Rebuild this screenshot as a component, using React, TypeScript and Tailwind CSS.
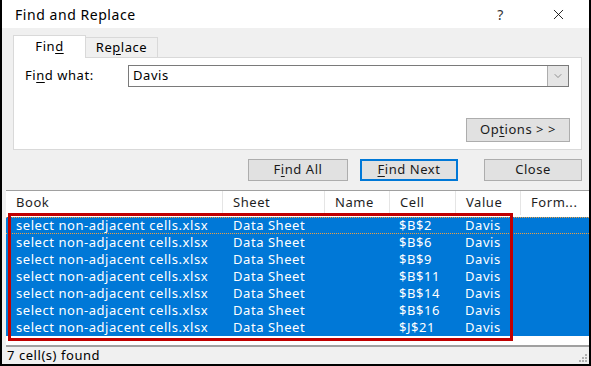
import { X, ChevronDown } from 'lucide-react';

const font = { fontFamily: '"Noto Sans", "Open Sans", sans-serif' };

const rows = [
  { cell: '$B$2' },
  { cell: '$B$6' },
  { cell: '$B$9' },
  { cell: '$B$11' },
  { cell: '$B$14' },
  { cell: '$B$16' },
  { cell: '$J$21' },
];

const cols = 'grid grid-cols-[217px_102px_65px_66px_65px_68px]';

const Btn = ({ children, primary, className }: { children: React.ReactNode; primary?: boolean; className?: string }) => (
  <div
    className={
      'h-[22px] flex items-center justify-center bg-[#e1e1e1] text-[13px] text-[#1a1a1a] ' +
      (primary ? 'border-2 border-[#0078d7] ' : 'border border-[#adadad] ') +
      (className ?? '')
    }
  >
    {children}
  </div>
);

export default function App() {
  return (
    <div className="w-[591px] h-[366px] bg-[#f0f0f0] border-x-2 border-b-2 border-black flex flex-col overflow-hidden tracking-[0.55px]" style={font}>
      {/* title bar */}
      <div className="h-[28px] bg-white flex items-center pl-[13px] pr-[22px] shrink-0">
        <span className="text-[14px] text-black">Find and Replace</span>
        <span className="ml-auto text-[14px] text-[#333] mr-[46px]">?</span>
        <X size={17} strokeWidth={1.2} className="text-black" />
      </div>

      {/* tabs */}
      <div className="flex items-end ml-[11px] mt-[7px] h-[22px]">
        <div className="w-[73px] h-[23px] bg-white border border-[#d9d9d9] border-b-0 flex items-center justify-center text-[13px] text-black relative z-10 -mb-px">
          Fin<span className="underline underline-offset-2">d</span>
        </div>
        <div className="w-[72px] h-[20px] bg-[#f0f0f0] border border-[#d9d9d9] border-b-0 border-l-0 flex items-center justify-center text-[13px] text-black">
          Re<span className="underline underline-offset-2">p</span>lace
        </div>
      </div>

      {/* panel */}
      <div className="ml-[11px] mr-[7px] h-[93px] bg-white border border-[#d9d9d9] flex flex-col px-[11px] pt-[7px]">
        <div className="flex items-center h-[22px]">
          <span className="w-[103px] text-[13px] text-black">
            Fi<span className="underline underline-offset-2">n</span>d what:
          </span>
          <div className="flex-1 mr-[1px] h-[22px] border border-[#7a7a7a] flex items-center">
            <span className="pl-[4px] text-[13px] text-black flex-1">Davis</span>
            <div className="w-[21px] h-[20px] bg-[#e5e5e5] border-l border-[#adadad] flex items-center justify-center">
              <ChevronDown size={12} strokeWidth={1.2} className="text-[#555]" />
            </div>
          </div>
        </div>
        <div className="flex justify-end mt-[31px]">
          <Btn className="w-[104px] h-[24px]">
            Op<span className="underline underline-offset-2">t</span>ions &gt; &gt;
          </Btn>
        </div>
      </div>

      {/* buttons */}
      <div className="flex items-center mt-[9px] ml-[246px] gap-[12px] h-[22px]">
        <Btn className="w-[100px]">
          F<span className="underline underline-offset-2">i</span>nd All
        </Btn>
        <Btn primary className="w-[98px]">
          <span className="underline underline-offset-2">F</span>ind Next
        </Btn>
        <Btn className="w-[98px] ml-[14px]">Close</Btn>
      </div>

      {/* results */}
      <div className="mt-[9px] ml-[4px] flex-1 flex flex-col relative">
        <div className="border-t border-[#a0a0a0] bg-white flex-1 flex flex-col">
          <div className={cols + ' h-[24px] text-[13px] text-[#1e1e1e]'}>
            {['Book', 'Sheet', 'Name', 'Cell', 'Value', 'Form...'].map((h, i) => (
              <div key={h} className={'flex items-center pl-[10px] ' + (i < 5 ? 'border-r border-[#e5e5e5]' : '')}>
                {h}
              </div>
            ))}
          </div>
          <div className="mt-[2px] bg-[#0078d7] text-white text-[13px] leading-[17px] relative">
            {rows.map((r) => (
              <div key={r.cell} className={cols + ' h-[17px] items-center'}>
                <div className="pl-[10px] whitespace-nowrap">select non-adjacent cells.xlsx</div>
                <div className="pl-[10px]">Data Sheet</div>
                <div />
                <div className="pl-[9px]">{r.cell}</div>
                <div className="pl-[9px]">Davis</div>
                <div />
              </div>
            ))}
            <div className="absolute left-0 right-0 top-0 h-[17px] border-y border-dotted border-[#f0a040] pointer-events-none" />
          </div>
          <div className="flex-1" />
        </div>
        <div className="h-[19px] border-t-2 border-[#a0a0a0] bg-[#f0f0f0] flex items-center pl-[1px] text-[13px] text-black relative">
          7 cell(s) found
          <svg className="absolute right-[1px] bottom-[1px]" width="12" height="12" viewBox="0 0 12 12">
            {[[9, 3], [6, 6], [9, 6], [3, 9], [6, 9], [9, 9]].map(([x, y]) => (
              <rect key={`${x}-${y}`} x={x} y={y} width="2" height="2" fill="#b0b0b0" />
            ))}
          </svg>
        </div>
        <div className="absolute left-[2px] top-[23px] w-[505px] h-[128px] border-[3px] border-[#c00000] pointer-events-none" />
      </div>
    </div>
  );
}
